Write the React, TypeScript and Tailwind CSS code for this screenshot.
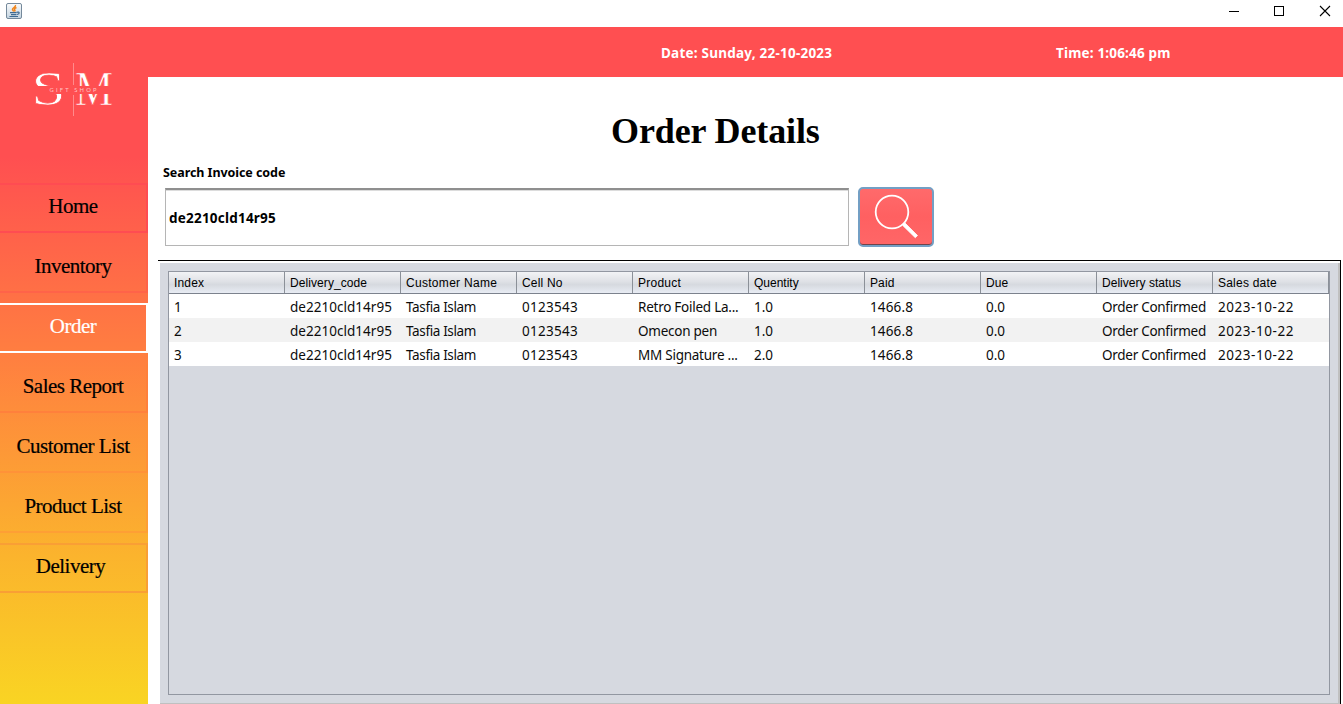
import React from "react";

const navItems = [
  { label: "Home", cls: "border-[#ff4c52] border-y-2 border-r-2" },
  { label: "Inventory", cls: "border-[#ff6349] border-b-2 border-t-2 border-t-transparent border-r-2" },
  { label: "Order", cls: "border-white border-y-2 border-r-2 text-white" },
  { label: "Sales Report", cls: "border-[#ff803c] border-b-2 border-t-2 border-t-transparent border-r-2" },
  { label: "Customer List", cls: "border-[#ff9238] border-b-2 border-t-2 border-t-transparent border-r-2" },
  { label: "Product List", cls: "border-[#fe9f35] border-b-2 border-t-2 border-t-transparent border-r-2" },
  { label: "Delivery", cls: "border-[#f99f35] border-y-2 border-r-2 pr-[5px]" },
];

const columns = [
  { title: "Index", head: "tracking-[0.15px]", cell: "" },
  { title: "Delivery_code", head: "tracking-[0.08px]", cell: "tracking-[0.03px]" },
  { title: "Customer Name", head: "tracking-[0.3px]", cell: "tracking-[-0.36px]" },
  { title: "Cell No", head: "tracking-[0.2px]", cell: "tracking-[0.28px]" },
  { title: "Product", head: "tracking-[0.25px]", cell: "tracking-[-0.25px]" },
  { title: "Quentity", head: "", cell: "" },
  { title: "Paid", head: "tracking-[0.1px]", cell: "tracking-[0.15px]" },
  { title: "Due", head: "tracking-[0.1px]", cell: "" },
  { title: "Delivery status", head: "tracking-[0.03px]", cell: "tracking-[-0.28px]" },
  { title: "Sales date", head: "tracking-[0.22px]", cell: "tracking-[0.55px]" },
];

const rows = [
  ["1", "de2210cld14r95", "Tasfia Islam", "0123543", "Retro Foiled La...", "1.0", "1466.8", "0.0", "Order Confirmed", "2023-10-22"],
  ["2", "de2210cld14r95", "Tasfia Islam", "0123543", "Omecon pen", "1.0", "1466.8", "0.0", "Order Confirmed", "2023-10-22"],
  ["3", "de2210cld14r95", "Tasfia Islam", "0123543", "MM Signature ...", "2.0", "1466.8", "0.0", "Order Confirmed", "2023-10-22"],
];

function JavaIcon() {
  return (
    <svg width="16" height="16" viewBox="0 0 16 16" fill="none">
      <defs>
        <linearGradient id="cup-bg" x1="0" y1="0" x2="0" y2="1">
          <stop offset="0" stopColor="#fbfcfd" />
          <stop offset="1" stopColor="#c3d3df" />
        </linearGradient>
      </defs>
      <rect x="0.5" y="0.5" width="15" height="15" rx="1.5" fill="url(#cup-bg)" stroke="#75899b" />
      <path d="M9.500 2c.6 2-3 2.700-3 4.300 0 .9.900 1.400 1.300 2.200M10.500 4.500C8.500 5.300 8 6 8.800 7c.4.500.2 1-.3 1.500" stroke="#f0851c" strokeWidth="1.500" />
      <path d="M4 9.700h6.500M5 11.700h5.500M3.500 13.500h8.500" stroke="#3f6a91" strokeWidth="1.200" />
      <path d="M10.500 9.300c3.500-1 3.500 1.700.5 2.200" stroke="#3f6a91" strokeWidth="1.200" />
    </svg>
  );
}

function TitleBar() {
  return (
    <header className="flex h-[27px] shrink-0 items-start justify-between bg-white">
      <div className="pt-[3px] pl-[6px]">
        <JavaIcon />
      </div>
      <svg width="115" height="24" viewBox="0 0 115 24" fill="none" stroke="#000">
        <path d="M1 11.500h10" shapeRendering="crispEdges" />
        <rect x="46.500" y="6.500" width="9" height="9" shapeRendering="crispEdges" />
        <path d="M92 6l10 10M102 6l-10 10" strokeWidth="1.100" />
      </svg>
    </header>
  );
}

function Logo() {
  return (
    <svg width="84" height="60" viewBox="0 0 84 60" className="mt-[33px] ml-[32px]">
      <g fill="#fff" stroke="#ff4f51" strokeWidth=".7" fontFamily="'Liberation Serif', serif">
        <text x="-0.500" y="45.300" fontSize="49" textLength="34" lengthAdjust="spacingAndGlyphs">S</text>
        <text x="43" y="45" fontSize="49" textLength="38" lengthAdjust="spacingAndGlyphs">M</text>
      </g>
      <path d="M0 26h82v8H0z" fill="#ff4f51" />
      <path d="M41.500 3v22M41.500 35v21" stroke="#ff8b8c" />
      <text x="17.500" y="32.200" fontSize="5.800" fill="#ffc4c4" fontFamily="Lato, sans-serif" textLength="47">GIFT SHOP</text>
    </svg>
  );
}

function Sidebar() {
  return (
    <aside className="flex w-[148px] shrink-0 flex-col bg-[linear-gradient(180deg,#ff4f51_0px,#ff4f51_130px,#ff7f40_330px,#fbb42d_530px,#f9d423_677px)]">
      <div className="h-[156px] shrink-0">
        <Logo />
      </div>
      <nav className="flex flex-col gap-[10px] font-['Liberation_Serif',serif] text-[21px] leading-[42px] tracking-[-0.5px] text-black">
        {navItems.map((item) => (
          <button
            key={item.label}
            className={`flex h-[50px] w-[148px] items-start justify-center whitespace-nowrap [-webkit-text-stroke:0.2px] ${item.cls}`}
          >
            {item.label}
          </button>
        ))}
      </nav>
    </aside>
  );
}

function OrdersTable() {
  return (
    <section className="ml-[10px] flex h-[444px] w-[1183px] flex-col border-t border-r border-black">
      <div className="mt-[2px] ml-[2px] h-[441px] border-r-2 border-b border-[#c0c0c0] bg-[#d6d9e0] pt-[8px] pr-[8px] pl-[8px]">
        <div className="h-[424px] border border-[#9297a1] font-['Noto_Sans',sans-serif] text-[13.5px] text-[#0c0c0c]">
          <div className="grid h-[22px] grid-cols-[repeat(10,116px)] border-b border-[#7c828d] bg-[linear-gradient(180deg,#f2f3f5_0%,#dfe1e6_45%,#d6d9df_60%,#e8ecf4_100%)] font-['Liberation_Sans',sans-serif] text-[12px] leading-[22px] text-black">
            {columns.map((c) => (
              <div key={c.title} className={`h-[21px] border-r border-[#8b9098] pl-[5px] whitespace-nowrap ${c.head}`}>
                {c.title}
              </div>
            ))}
          </div>
          {rows.map((row, i) => (
            <div key={i} className={`grid h-[24px] grid-cols-[repeat(10,116px)] leading-[26px] ${i % 2 ? "bg-[#f2f2f2]" : "bg-white"}`}>
              {row.map((cell, j) => (
                <div key={j} className={`h-[24px] pl-[5px] whitespace-nowrap ${columns[j].cell}`}>
                  {cell}
                </div>
              ))}
            </div>
          ))}
        </div>
      </div>
    </section>
  );
}

export default function App() {
  return (
    <div className="flex h-[704px] w-[1343px] flex-col overflow-hidden bg-white">
      <TitleBar />
      <div className="flex h-[677px]">
        <Sidebar />
        <main className="flex w-[1195px] flex-col">
          <div className="flex h-[50px] shrink-0 bg-[#ff4f51] pl-[513px] font-['Noto_Sans',sans-serif] text-[13.5px] leading-[52px] font-bold text-white">
            <div className="w-[395px] tracking-[0.23px]">Date: Sunday, 22-10-2023</div>
            <div className="tracking-[0.18px]">Time: 1:06:46 pm</div>
          </div>
          <h1 className="mt-[33px] h-[42px] pl-[463px] font-['Liberation_Serif',serif] text-[36px] leading-[42px] font-bold tracking-[-0.12px] text-black">
            Order Details
          </h1>
          <label className="mt-[11px] h-[20px] pl-[15px] font-['Noto_Sans',sans-serif] text-[12.5px] leading-[20px] font-bold tracking-[-0.06px] text-black">
            Search Invoice code
          </label>
          <div className="mt-[3px] flex h-[61px] pl-[17px]">
            <input
              defaultValue="de2210cld14r95"
              className="mt-[2px] h-[58px] w-[684px] border border-t-2 border-[#b5b5b5] border-t-[#8f8f8f] bg-white pl-[3px] font-['Noto_Sans',sans-serif] text-[13.5px] font-bold tracking-[0.22px] text-black shadow-[inset_0_1px_0_#dcdcdc] outline-none"
            />
            <button className="mt-px ml-[9px] flex h-[60px] w-[76px] rounded-[5px] border-2 border-[#739fc4] bg-[linear-gradient(180deg,#ff6a6b,#ff6061_50%,#ff6667)] shadow-[inset_0_-1px_0_#70434a]">
              <svg width="72" height="56" viewBox="0 0 72 56" fill="none" stroke="#fff">
                <circle cx="32" cy="23" r="16.300" strokeWidth="1.800" />
                <path d="M43 35l2-1 12.500 12.500-2.200 2.200-12.300-12z" fill="#fff" strokeWidth=".8" />
              </svg>
            </button>
          </div>
          <div className="h-[13px] shrink-0" />
          <OrdersTable />
        </main>
      </div>
    </div>
  );
}
